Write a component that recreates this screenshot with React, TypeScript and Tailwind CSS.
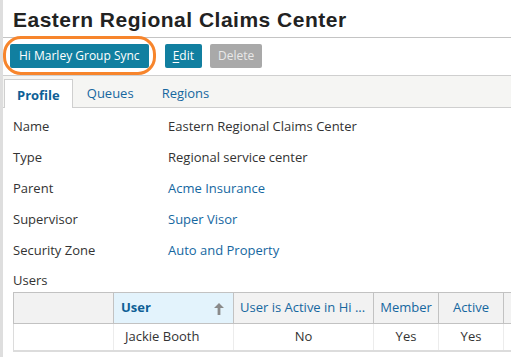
export default function App() {
  const rows = [
    { label: "Name", value: "Eastern Regional Claims Center", link: false },
    { label: "Type", value: "Regional service center", link: false },
    { label: "Parent", value: "Acme Insurance", link: true },
    { label: "Supervisor", value: "Super Visor", link: true },
    { label: "Security Zone", value: "Auto and Property", link: true },
  ];

  return (
    <div className="w-[511px] h-[357px] overflow-hidden flex bg-white font-['Open_Sans',sans-serif] text-[13px] text-[#333]">
      <div className="w-[3px] shrink-0 bg-[#dedede]" />

      <div className="flex-1 min-w-0 flex flex-col">
        <div className="h-[38px] shrink-0 border-b border-[#c4c4c4] pl-[10px] pt-[4px] font-['Liberation_Sans',Arial,sans-serif] font-bold text-[21px] tracking-[0.5px] text-[#222] whitespace-nowrap">
          Eastern Regional Claims Center
        </div>

        <div className="h-[37px] shrink-0 flex items-center pl-[7px] pb-[1px] text-[12px]">
          <div className="relative">
            <button className="h-[24px] px-[9px] rounded-[2px] bg-[#117fa0] text-white">
              Hi Marley Group Sync
            </button>
            <div className="absolute -left-[7px] -right-[7px] -top-[8px] -bottom-[7px] rounded-[18px] border-[3px] border-[#f7852c]" />
          </div>
          <button className="ml-[16px] h-[24px] px-[8px] rounded-[2px] bg-[#117fa0] text-white">
            <span className="underline underline-offset-2">E</span>dit
          </button>
          <button className="ml-[8px] h-[24px] px-[8px] rounded-[2px] bg-[#a9a9a9] text-[#e8e8e8]">
            Delete
          </button>
        </div>

        <div className="h-[33px] shrink-0 flex items-end border-t border-b border-[#cfcfcf] bg-[#f5f5f3] pl-[1px]">
          <div className="h-[29px] -mb-[1px] px-[12px] pt-[3px] flex items-center bg-white border border-b-0 border-[#cfcfcf] font-bold text-[#0e5f96]">
            Profile
          </div>
          <div className="h-[29px] px-[14px] pt-[3px] flex items-center text-[#16679f]">Queues</div>
          <div className="h-[29px] px-[14px] pt-[3px] flex items-center text-[#16679f]">Regions</div>
        </div>

        <div className="pl-[10px] pt-[3px]">
          {rows.map((r) => (
            <div key={r.label} className="h-[31px] flex items-center">
              <div className="w-[155px] shrink-0">{r.label}</div>
              <div className={r.link ? "text-[#15679f]" : ""}>{r.value}</div>
            </div>
          ))}
          <div className="h-[26px] flex items-end pb-[2px]">Users</div>
        </div>

        <div className="pl-[10px]">
          <div className="flex w-[520px] border border-[#c2c2c2] bg-[#f2f2f2] h-[32px]">
            <div className="w-[100px] shrink-0 border-r border-[#c2c2c2]" />
            <div className="w-[120px] shrink-0 border-r border-[#c2c2c2] bg-[#e3f3fc] flex items-center justify-between pl-[7px] pr-[9px] font-bold text-[#0e5f96]">
              <span>User</span>
              <svg width="10" height="12" viewBox="0 0 10 12" className="mt-[1px]">
                <path d="M5 0 L10 5 H6.4 V12 H3.6 V5 H0 Z" fill="#8a8a8a" />
              </svg>
            </div>
            <div className="w-[140px] shrink-0 border-r border-[#c2c2c2] flex items-center pl-[6px] text-[#16679f] whitespace-nowrap overflow-hidden">
              User is Active in Hi ...
            </div>
            <div className="w-[65px] shrink-0 border-r border-[#c2c2c2] flex items-center justify-center text-[#16679f]">
              Member
            </div>
            <div className="w-[65px] shrink-0 border-r border-[#c2c2c2] flex items-center justify-center text-[#16679f]">
              Active
            </div>
            <div className="flex-1" />
          </div>
          <div className="flex w-[520px] h-[28px] border-l border-r border-b-2 border-[#dcdcdc] bg-white">
            <div className="w-[100px] shrink-0 border-r border-[#ececec]" />
            <div className="w-[120px] shrink-0 border-r border-[#ececec] flex items-center pl-[11px]">
              Jackie Booth
            </div>
            <div className="w-[140px] shrink-0 border-r border-[#ececec] flex items-center justify-center">
              No
            </div>
            <div className="w-[65px] shrink-0 border-r border-[#ececec] flex items-center justify-center">
              Yes
            </div>
            <div className="w-[65px] shrink-0 border-r border-[#ececec] flex items-center justify-center">
              Yes
            </div>
            <div className="flex-1" />
          </div>
        </div>
      </div>
    </div>
  );
}
